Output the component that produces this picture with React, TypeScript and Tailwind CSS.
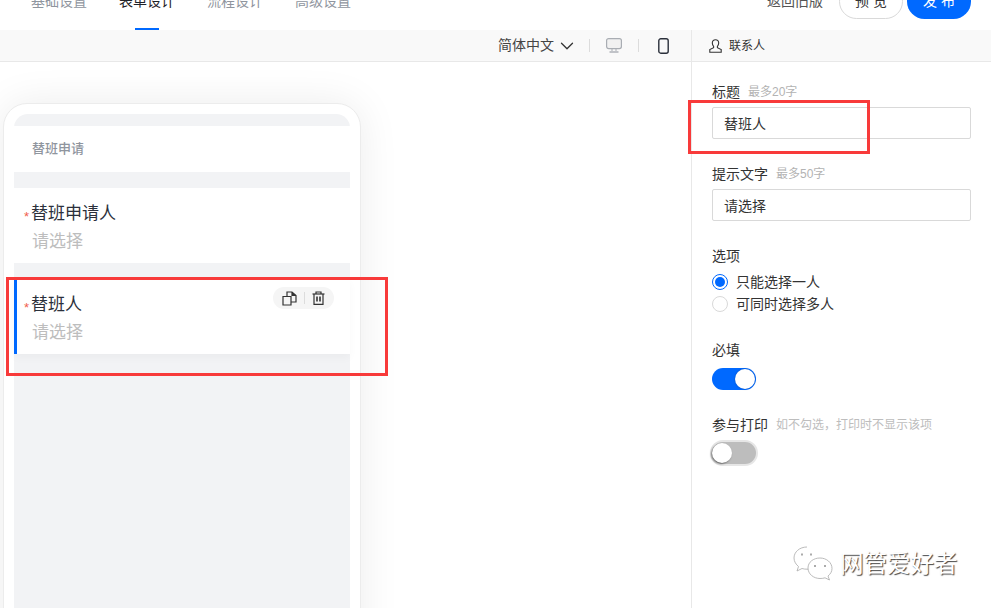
import { ChevronDown } from 'lucide-react';

const tabs = ['基础设置', '表单设计', '流程设计', '高级设置'];

function Toggle({ on }: { on: boolean }) {
  if (on) {
    return (
      <div className="mt-[8px] flex h-[22px] w-[44px] items-center justify-end rounded-full bg-[#0069ff] pr-[1px]">
        <div className="h-[20px] w-[20px] rounded-full bg-white shadow-[0_0_2px_rgba(0,0,0,0.3)]" />
      </div>
    );
  }
  return (
    <div className="-ml-[2px] mt-[5px] flex h-[26px] w-[48px] items-center rounded-full border-[2px] border-[#e6e6e6] bg-[#bdbdbd]">
      <div className="h-[20px] w-[20px] rounded-full bg-white shadow-[-1px_1px_2px_rgba(0,0,0,0.5)]" />
    </div>
  );
}

function Radio({ on, label }: { on: boolean; label: string }) {
  return (
    <div className="flex h-[22px] items-center gap-[8px] text-[14px] text-[#333]">
      <div
        className={
          on
            ? 'flex h-[16px] w-[16px] items-center justify-center rounded-full border border-[#0069ff]'
            : 'h-[16px] w-[16px] rounded-full border border-[#d9d9d9]'
        }
      >
        {on && <div className="h-[10px] w-[10px] rounded-full bg-[#0069ff]" />}
      </div>
      {label}
    </div>
  );
}

function FormCard({ title, selected }: { title: string; selected?: boolean }) {
  return (
    <div
      className={
        selected
          ? 'relative h-[75px] border-l-[3px] border-[#0069ff] bg-white pl-[7px] pt-[14px] shadow-[0_4px_8px_rgba(0,0,0,0.03)]'
          : 'relative h-[75px] bg-white pl-[10px] pt-[14px]'
      }
    >
      <div className="flex h-[24px] items-center text-[17px] leading-[24px] text-[#2b303b]">
        <span className="mr-[1px] mt-[5px] w-[6px] text-[13px] leading-none text-[#f0604d]">*</span>
        {title}
      </div>
      <div className="ml-[8px] mt-[4px] text-[17px] leading-[24px] text-[#bdbdbd]">请选择</div>
      {selected && (
        <div className="absolute right-[16px] top-[8px] flex h-[22px] w-[61px] items-center justify-center gap-[7px] rounded-full bg-[#f5f5f5]">
          <svg width="15" height="15" viewBox="0 0 15 15" fill="none" stroke="#333" strokeWidth="1.2">
            <path d="M1 5.5h8v8.5H1z" />
            <path d="M5 5.5V1h5l4 3.5v6.5H9" />
            <path d="M10 1v3.500h4" fill="#333" />
          </svg>
          <div className="h-[12px] w-px bg-[#dcdcdc]" />
          <svg width="13" height="14" viewBox="0 0 13 14" fill="none" stroke="#333" strokeWidth="1.2">
            <path d="M0.5 3h12" />
            <path d="M4 3V1h5v2" />
            <path d="M2 3v10.400h9V3" />
            <path d="M5 5.500v5M8 5.500v5" strokeWidth="1.6" />
          </svg>
        </div>
      )}
    </div>
  );
}

export default function App() {
  return (
    <div className="relative flex h-[608px] w-[991px] flex-col overflow-hidden bg-white [font-family:'Liberation_Sans','Noto_Sans_CJK_SC',sans-serif]">
      {/* Top bar, cut off by the screenshot */}
      <div className="h-[30px] shrink-0 overflow-hidden">
        <div className="-mt-[28px] flex h-[58px] items-center justify-between pl-[31px] pr-[20px]">
          <div className="flex h-full gap-[32px] text-[14px]">
            {tabs.map((tab, i) => (
              <div key={tab} className="relative flex h-full items-center">
                <span className={i === 1 ? 'text-[#1f2329]' : 'text-[#8f959e]'}>{tab}</span>
                {i === 1 && (
                  <div className="absolute bottom-0 left-[16px] h-[2px] w-[24px] bg-[#0069ff]" />
                )}
              </div>
            ))}
          </div>
          <div className="flex items-center text-[14px]">
            <span className="mr-[16px] text-[#555]">返回旧版</span>
            <div className="mr-[4px] flex h-[35px] w-[64px] items-center justify-center rounded-full border border-[#d9d9d9] text-[#333]">
              预 览
            </div>
            <div className="flex h-[35px] w-[64px] items-center justify-center rounded-full bg-[#0069ff] text-white">
              发 布
            </div>
          </div>
        </div>
      </div>

      {/* Toolbar */}
      <div className="flex h-[32px] shrink-0 border-b border-[#e8e8e8] bg-[#f9f9f9]">
        <div className="flex w-[691px] items-center pl-[498px]">
          <span className="text-[14px] text-[#444]">简体中文</span>
          <ChevronDown className="ml-[2px] text-[#333]" size={22} strokeWidth={1.4} />
          <div className="ml-[11px] h-[13px] w-px bg-[#dcdcdc]" />
          <svg className="ml-[16px]" width="16" height="15" viewBox="0 0 16 15" fill="none">
            <rect x="0.6" y="0.6" width="14.8" height="10" rx="2" stroke="#a9adb3" strokeWidth="1.2" fill="#f1f1f1" />
            <path d="M6 11v2M10 11v2" stroke="#a9adb3" />
            <path d="M3.500 14h9" stroke="#a9adb3" strokeWidth="1.4" />
          </svg>
          <div className="ml-[16px] h-[13px] w-px bg-[#dcdcdc]" />
          <svg className="ml-[19px]" width="11" height="16" viewBox="0 0 11 16" fill="none">
            <rect x="0.8" y="0.8" width="9.4" height="14.4" rx="2" stroke="#2b303b" strokeWidth="1.4" />
          </svg>
        </div>
        <div className="flex flex-1 items-center gap-[7px] border-l border-[#e8e8e8] pl-[17px] text-[12px] text-[#333]">
          <svg width="13" height="14" viewBox="0 0 13 14" fill="none" stroke="#333" strokeWidth="1.1">
            <path d="M6.500 0.8c-2 0-3.200 1.400-3.200 3.300 0 1.400 0.600 2.500 1.300 3.200v1.400L0.800 10.500v2.700h11.400v-2.700L8.400 8.700V7.300c0.700-0.700 1.300-1.800 1.300-3.200 0-1.900-1.200-3.300-3.200-3.300z" />
          </svg>
          联系人
        </div>
      </div>

      <div className="flex min-h-0 flex-1">
        {/* Canvas with the phone preview */}
        <div className="w-[691px] pl-[3px] pt-[41px]">
          <div className="h-[560px] w-[358px] rounded-[24px] border border-[#ececec] bg-white px-[10px] pt-[10px] shadow-[0_0_40px_rgba(0,0,0,0.08)]">
            <div className="flex h-full flex-col rounded-t-[14px] bg-[#f2f3f5] pt-[12px]">
              <div className="flex h-[46px] items-center bg-white pl-[18px] text-[13px] font-medium text-[#8f959e]">
                替班申请
              </div>
              <div className="mt-[16px] flex flex-col gap-[16px]">
                <FormCard title="替班申请人" />
                <FormCard title="替班人" selected />
              </div>
            </div>
          </div>
        </div>

        {/* Property panel */}
        <div className="flex-1 border-l border-[#e8e8e8] pl-[20px] pr-[20px] pt-[20px] text-[14px] text-[#333]">
          <div className="flex h-[20px] items-center gap-[8px]">
            标题 <span className="text-[12px] text-[#b3b3b3]">最多20字</span>
          </div>
          <div className="mt-[5px] flex h-[32px] items-center rounded-[2px] border border-[#d9d9d9] pl-[11px] pt-[2px]">替班人</div>
          <div className="mt-[25px] flex h-[20px] items-center gap-[8px]">
            提示文字 <span className="text-[12px] text-[#b3b3b3]">最多50字</span>
          </div>
          <div className="mt-[5px] flex h-[32px] items-center rounded-[2px] border border-[#d9d9d9] pl-[11px] pt-[2px]">请选择</div>
          <div className="mt-[25px] h-[20px] leading-[20px]">选项</div>
          <div className="mt-[5px]">
            <Radio on label="只能选择一人" />
            <Radio on={false} label="可同时选择多人" />
          </div>
          <div className="mt-[25px] h-[20px] leading-[20px]">必填</div>
          <Toggle on />
          <div className="mt-[25px] flex h-[20px] items-center gap-[8px]">
            参与打印 <span className="text-[12px] text-[#bdbdbd]">如不勾选，打印时不显示该项</span>
          </div>
          <Toggle on={false} />
        </div>
      </div>

      {/* Red annotation boxes drawn over the screenshot */}
      <div className="absolute left-[6px] top-[277px] h-[99px] w-[382px] border-[3px] border-[#f83a3a]" />
      <div className="absolute left-[688px] top-[100px] h-[54px] w-[182px] border-[3px] border-[#f83a3a]" />

      {/* Watermark */}
      <div className="absolute left-[793px] top-[546px] flex items-center gap-[7px]">
        <svg width="40" height="36" viewBox="0 0 40 36" fill="none" stroke="#aaa" strokeWidth="0.8">
          <path d="M14 1C6.500 1 1 6 1 12c0 3.500 2 6.500 4.500 8.500L4 25l5-2.500c1.500 0.500 3 0.700 5 0.700 1 0 1.500 0 2.500-0.200" fill="#fff" />
          <path d="M27 12c6.500 0 12 4.500 12 10.500 0 3-1.500 5.500-4 7.500l1.500 4-4.500-2.200c-1.500 0.500-3 0.700-5 0.700-6.500 0-12-4.500-12-10.500S20.500 12 27 12z" fill="#fff" />
          <path d="M9 7.500v2M18 7.500v2M22 19v2M32 19v2" stroke="#888" strokeWidth="1.4" />
        </svg>
        <span className="text-[23.500px] leading-[30px] text-white [text-shadow:1px_1px_1px_#444]">网管爱好者</span>
      </div>
    </div>
  );
}
